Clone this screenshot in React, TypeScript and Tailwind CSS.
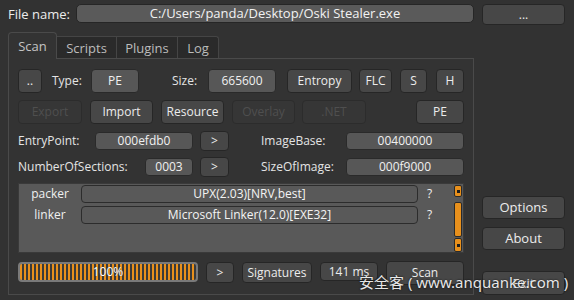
import React from "react";

const font = { fontFamily: '"Open Sans", "Noto Sans", sans-serif' };

const btn = "flex items-center justify-center rounded-[4px] border border-[#262626] bg-[#474747] text-[#ececec]";
const off = "flex items-center justify-center rounded-[4px] border border-[#2c2c2c] bg-[#363636] text-[#4f4f4f]";
const box = "flex items-center justify-center rounded-[4px] border border-[#2a2a2a] bg-[#575757] text-[#f0f0f0]";

function Pane() {
  return (
    <div className="h-[237px] w-[466px] border border-[#4a4a4a] bg-[#333333] pl-[9px] pt-[10px]">
      {/* row 1 */}
      <div className="flex h-[24px] items-center">
        <div className={`${btn} h-[24px] w-[24px]`}>..</div>
        <div className="w-[49px] pl-[10px] text-[#e4e4e4]">Type:</div>
        <div className={`${box} h-[24px] w-[48px] bg-[#505050]`}>PE</div>
        <div className="w-[69px] pl-[33px] text-[#e4e4e4]">Size:</div>
        <div className={`${box} h-[24px] w-[68px] bg-[#505050]`}>665600</div>
        <div className={`${btn} ml-[11px] h-[24px] w-[65px]`}>Entropy</div>
        <div className={`${btn} ml-[7px] h-[24px] w-[33px]`}>FLC</div>
        <div className={`${btn} ml-[8px] h-[24px] w-[27px]`}>S</div>
        <div className={`${btn} ml-[9px] h-[24px] w-[28px]`}>H</div>
      </div>
      {/* row 2 */}
      <div className="mt-[7px] flex h-[24px] items-center">
        <div className={`${off} h-[24px] w-[64px]`}>Export</div>
        <div className={`${btn} ml-[8px] h-[24px] w-[63px]`}>Import</div>
        <div className={`${btn} ml-[8px] h-[24px] w-[63px]`}>Resource</div>
        <div className={`${off} ml-[8px] h-[24px] w-[63px]`}>Overlay</div>
        <div className={`${off} ml-[7px] h-[24px] w-[64px]`}>.NET</div>
        <div className={`${btn} ml-[50px] h-[24px] w-[48px]`}>PE</div>
      </div>
      {/* row 3 */}
      <div className="mt-[7px] flex h-[20px] items-center">
        <div className="w-[77px] text-[#e4e4e4]">EntryPoint:</div>
        <div className={`${box} h-[18px] w-[98px]`}>000efdb0</div>
        <div className={`${btn} ml-[7px] h-[20px] w-[29px]`}>&gt;</div>
        <div className="w-[117px] pl-[32px] text-[#e4e4e4]">ImageBase:</div>
        <div className={`${box} h-[18px] w-[118px]`}>00400000</div>
      </div>
      {/* row 4 */}
      <div className="mt-[6px] flex h-[20px] items-center">
        <div className="w-[127px] text-[#e4e4e4]">NumberOfSections:</div>
        <div className={`${box} h-[18px] w-[48px]`}>0003</div>
        <div className={`${btn} ml-[7px] h-[20px] w-[29px]`}>&gt;</div>
        <div className="w-[117px] pl-[32px] text-[#e4e4e4]">SizeOfImage:</div>
        <div className={`${box} h-[18px] w-[118px]`}>000f9000</div>
      </div>
      {/* results */}
      <div className="mt-[6px] flex h-[70px] w-[446px] border border-[#3a3a3a] bg-[#595959]">
        <div className="flex flex-1 flex-col gap-[3px] pt-[1px]">
          {[
            ["packer", "UPX(2.03)[NRV,best]"],
            ["linker", "Microsoft Linker(12.0)[EXE32]"],
          ].map(([k, v]) => (
            <div key={k} className="flex h-[18px] items-center">
              <div className="w-[62px] text-center text-[#f0f0f0]">{k}</div>
              <div className="flex h-[18px] w-[337px] items-center justify-center rounded-[4px] border border-[#2c2c2c] bg-[#595959] text-[#f4f4f4]">
                {v}
              </div>
              <div className="pl-[9px] text-[#f0f0f0]">?</div>
            </div>
          ))}
        </div>
        <div className="mr-px flex w-[8px] flex-col pt-[1px]">
          <div className="flex h-[12px] items-center justify-center rounded-[2px] border border-[#2a2a2a] bg-[#e8901c]">
            <div className="h-[3px] w-[3px] bg-[#1e1e1e]" />
          </div>
          <div className="mt-[5px] h-[35px] rounded-[2px] border border-[#2a2a2a] bg-[#e8901c]" />
          <div className="mt-[1px] flex h-[14px] items-center justify-center rounded-[2px] border border-[#2a2a2a] bg-[#e8901c]">
            <div className="h-[3px] w-[3px] bg-[#1e1e1e]" />
          </div>
        </div>
      </div>
      {/* bottom */}
      <div className="mt-[8px] flex h-[24px] items-start">
        <div className="relative mt-px flex h-[20px] w-[180px] items-center justify-center rounded-[4px] border-2 border-[#7a7a7a] bg-[repeating-linear-gradient(90deg,#e8901c_0px,#e8901c_2.5px,#3a3a3a_2.5px,#3a3a3a_4px)]">
          <span className="text-white [text-shadow:0_0_1px_#444]">100%</span>
        </div>
        <div className={`${btn} ml-[8px] mt-px h-[21px] w-[28px]`}>&gt;</div>
        <div className={`${btn} ml-[8px] mt-px h-[21px] w-[70px]`}>Signatures</div>
        <div className={`${btn} ml-[8px] mt-px h-[19px] w-[58px]`}>141 ms</div>
        <div className={`${btn} ml-[8px] h-[24px] w-[78px] items-start pt-[5px]`}>Scan</div>
      </div>
    </div>
  );
}

export default function App() {
  return (
    <div className="relative h-[300px] w-[574px] overflow-hidden bg-[#323232] text-[12px] leading-none" style={font}>
      <div className="flex pt-[4px]">
        <div className="w-[76px] pl-[8px] pt-[4px] text-[13px] text-[#ececec]">File name:</div>
        <div className="flex h-[19px] w-[398px] items-center justify-center rounded-[5px] border border-[#262626] bg-[#5a5a5a] text-[13px] text-[#f2f2f2]">
          C:/Users/panda/Desktop/Oski Stealer.exe
        </div>
        <div className={`${btn} ml-[8px] h-[21px] w-[83px] bg-[#444444]`}>...</div>
      </div>

      <div className="mt-[7px] flex pl-[8px]">
        <div className="flex flex-col">
          <div className="flex h-[27px] items-end">
            <div className="relative z-10 flex h-[27px] w-[49px] items-center justify-center rounded-t-[4px] border border-b-0 border-[#4a4a4a] bg-[#333333] text-[13px] text-[#c4c4c4]">
              Scan
            </div>
            <div className="flex h-[23px] w-[60px] items-center justify-center border border-b-0 border-l-0 border-[#454545] bg-[#2a2a2a] text-[13px] text-[#bcbcbc]">
              Scripts
            </div>
            <div className="flex h-[23px] w-[61px] items-center justify-center border border-b-0 border-l-0 border-[#454545] bg-[#2a2a2a] text-[13px] text-[#bcbcbc]">
              Plugins
            </div>
            <div className="flex h-[23px] w-[41px] items-center justify-center rounded-tr-[3px] border border-b-0 border-l-0 border-[#454545] bg-[#2a2a2a] text-[13px] text-[#bcbcbc]">
              Log
            </div>
          </div>
          <div className="-mt-px">
            <Pane />
          </div>
        </div>

        <div className="ml-[8px] flex w-[83px] flex-col pt-[164px]">
          <div className={`${btn} h-[23px] text-[13px]`}>Options</div>
          <div className={`${btn} mt-[8px] h-[23px] text-[13px]`}>About</div>
          <div className={`${btn} mt-[21px] h-[24px] text-[13px]`}>Exit</div>
        </div>
      </div>

      <div
        className="pointer-events-none absolute left-[359px] top-[275px] whitespace-nowrap text-[15px] text-white/90 [text-shadow:0_0_2px_#000]"
        style={{ fontFamily: '"Noto Sans", "Noto Sans CJK SC", sans-serif' }}
      >
        安全客 ( www.anquanke.com )
      </div>
    </div>
  );
}
